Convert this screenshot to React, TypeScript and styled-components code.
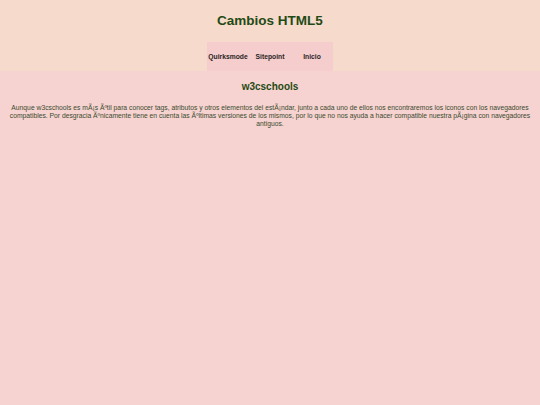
import React from "react";
import styled, { createGlobalStyle } from "styled-components";

const GlobalStyle = createGlobalStyle`
  html, body {
    margin: 0;
    padding: 0;
    background: #f6d3d0;
    font-family: "Liberation Sans", Arial, sans-serif;
  }
`;

const Header = styled.header`
  background: #f6dbcd;
  height: 71px;
  display: flex;
  flex-direction: column;
  align-items: center;
`;

const Title = styled.h1`
  margin: 12.6px 0 0;
  font-size: 13.5px;
  line-height: 15.5px;
  font-weight: bold;
  color: #1f4a14;
`;

const Nav = styled.nav`
  margin-top: auto;
  display: flex;
  background: #f5cdcd;
  height: 29px;
`;

const NavItem = styled.a`
  width: 42px;
  display: flex;
  align-items: center;
  justify-content: center;
  font-size: 6.75px;
  font-weight: bold;
  text-decoration: none;
  white-space: nowrap;
  &,
  &:link,
  &:visited {
    color: #2b1f1f;
  }
`;

const Main = styled.main`
  padding: 0 8px;
  text-align: center;
`;

const SectionTitle = styled.h2`
  margin: 10px 0 0;
  font-size: 10px;
  line-height: 11.5px;
  font-weight: bold;
  color: #1f4a14;
`;

const Paragraph = styled.p`
  margin: 11.5px 0 0;
  font-size: 6.75px;
  line-height: 8px;
  color: #3b4a2f;
`;

export default function App() {
  return (
    <>
      <GlobalStyle />
      <Header>
        <Title>Cambios HTML5</Title>
        <Nav>
          <NavItem href="#">Quirksmode</NavItem>
          <NavItem href="#">Sitepoint</NavItem>
          <NavItem href="#">Inicio</NavItem>
        </Nav>
      </Header>
      <Main>
        <SectionTitle>w3cschools</SectionTitle>
        <Paragraph>
          Aunque w3cschools es mÃ¡s Ãºtil para conocer tags, atributos y otros
          elementos del estÃ¡ndar, junto a cada uno de ellos nos encontraremos
          los iconos con los navegadores compatibles. Por desgracia Ãºnicamente
          tiene en cuenta las Ãºltimas versiones de los mismos, por lo que no
          nos ayuda a hacer compatible nuestra pÃ¡gina con navegadores antiguos.
        </Paragraph>
      </Main>
    </>
  );
}
